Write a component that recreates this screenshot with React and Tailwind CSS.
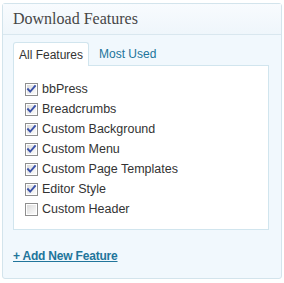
// Download Features box: serif header, two tabs, a checklist panel and an add link.
const features = [
  ['bbPress', true],
  ['Breadcrumbs', true],
  ['Custom Background', true],
  ['Custom Menu', true],
  ['Custom Page Templates', true],
  ['Editor Style', true],
  ['Custom Header', false],
]

function Check({ checked }) {
  return (
    <svg width="13" height="13" viewBox="0 0 13 13" className="shrink-0">
      <defs>
        <linearGradient id="cbg" x1="0" y1="0" x2="1" y2="1">
          <stop offset="0" stopColor="#dcdcdc" />
          <stop offset="1" stopColor="#fbfbfb" />
        </linearGradient>
      </defs>
      <rect x="0.5" y="0.5" width="12" height="12" fill="#fff" stroke="#8f8f8f" />
      <rect x="2" y="2" width="9" height="9" fill="url(#cbg)" />
      {checked && (
        <path d="M3 6.2 L5.2 8.6 L10 3" fill="none" stroke="#3a51a8" strokeWidth="1.9" strokeLinecap="square" />
      )}
    </svg>
  )
}

export default function App() {
  return (
    <div className="h-[283px] w-[284px] bg-white pl-[2px] pt-[3px]" style={{ fontFamily: '"Liberation Sans", Arial, sans-serif' }}>
      <div className="flex h-[276px] w-[280px] flex-col rounded-[3px] border border-[#d3e4ec] bg-[#f1f8fd]">
        <div className="h-[31px] border-b border-[#d9e7ef] bg-gradient-to-b from-[#f8fbfe] to-[#eff6fb] pl-[10px] pt-[5px]">
          <h3
            className="text-[16px] leading-[20px] text-[#464646]"
            style={{ fontFamily: '"Liberation Serif", Georgia, serif' }}
          >
            Download Features
          </h3>
        </div>

        <div className="px-[10px] pt-[7px]">
          <div className="flex text-[12px]">
            <div className="relative z-10 -mb-px h-[24px] rounded-t-[3px] border border-b-0 border-[#d1e5ee] bg-white px-[5px] pt-[5px] leading-[15px] text-[#333]">
              All Features
            </div>
            <div className="h-[23px] px-[10px] pt-[5px] leading-[15px] text-[#21759b]">Most Used</div>
          </div>

          <div className="h-[165px] w-[256px] border border-[#d1e5ee] bg-white pl-[11px] pt-[13px]">
            {features.map(([label, on]) => (
              <div key={label} className="flex h-[20px] items-center gap-[4px] text-[12.5px] leading-[15px] text-[#333]">
                <Check checked={on} />
                <span>{label}</span>
              </div>
            ))}
          </div>

          <a href="#" className="mt-[19px] inline-block text-[12px] font-bold leading-[14px] tracking-[-0.2px] text-[#21759b] underline">
            + Add New Feature
          </a>
        </div>
      </div>
    </div>
  )
}
